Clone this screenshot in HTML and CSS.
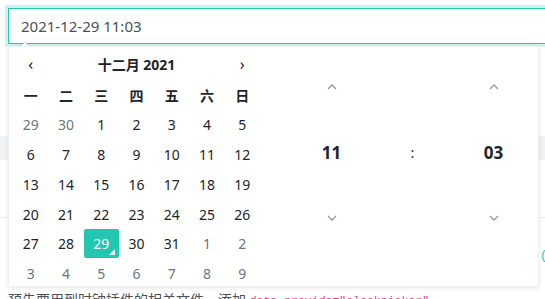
FILE: index.html
```html
<!DOCTYPE html>
<html>
<head>
<meta charset='UTF-8'>
<link rel="stylesheet" href="styles.css">
</head>
<body>
<div class='page'>
  <div class='field'>
    <input class='form-control' type='text' value='2021-12-29 11:03'>
    <div class='picker'>
      <div class='datepicker'>
        <div class='cal-head'>
          <span class='nav'>&#8249;</span>
          <span class='title'>十二月 2021</span>
          <span class='nav'>&#8250;</span>
        </div>
        <div class='cal-grid'>
          <span class='dow'>一</span><span class='dow'>二</span><span class='dow'>三</span><span class='dow'>四</span><span class='dow'>五</span><span class='dow'>六</span><span class='dow'>日</span>
          <span class='day old'>29</span><span class='day old'>30</span><span class='day'>1</span><span class='day'>2</span><span class='day'>3</span><span class='day'>4</span><span class='day'>5</span>
          <span class='day'>6</span><span class='day'>7</span><span class='day'>8</span><span class='day'>9</span><span class='day'>10</span><span class='day'>11</span><span class='day'>12</span>
          <span class='day'>13</span><span class='day'>14</span><span class='day'>15</span><span class='day'>16</span><span class='day'>17</span><span class='day'>18</span><span class='day'>19</span>
          <span class='day'>20</span><span class='day'>21</span><span class='day'>22</span><span class='day'>23</span><span class='day'>24</span><span class='day'>25</span><span class='day'>26</span>
          <span class='day'>27</span><span class='day'>28</span><span class='day active today'>29</span><span class='day'>30</span><span class='day'>31</span><span class='day old'>1</span><span class='day old'>2</span>
          <span class='day old'>3</span><span class='day old'>4</span><span class='day old'>5</span><span class='day old'>6</span><span class='day old'>7</span><span class='day old'>8</span><span class='day old'>9</span>
        </div>
      </div>
      <div class='timepicker'>
        <span class='chev'><svg width='10' height='6' viewBox='0 0 10 6'><path d='M1 5 L5 1 L9 5'/></svg></span>
        <span></span>
        <span class='chev'><svg width='10' height='6' viewBox='0 0 10 6'><path d='M1 5 L5 1 L9 5'/></svg></span>
        <span class='num'>11</span>
        <span class='sep'>:</span>
        <span class='num'>03</span>
        <span class='chev'><svg width='10' height='6' viewBox='0 0 10 6'><path d='M1 1 L5 5 L9 1'/></svg></span>
        <span></span>
        <span class='chev'><svg width='10' height='6' viewBox='0 0 10 6'><path d='M1 1 L5 5 L9 1'/></svg></span>
      </div>
    </div>
  </div>
  <div class='band'></div>
  <div class='rule'></div>
  <div class='code-line'><code>(</code></div>
  <p class='note'>预先要用到时钟插件的相关文件，添加 <code>data-provide="clockpicker"</code></p>
</div>
</body>
</html>
```
FILE: styles.css
```css
/* Variables */

:root {
    --teal: #22c7b2;
    --text: #212529;
    --muted: #6c757d;
}

* {
    margin: 0;
    padding: 0;
    box-sizing: border-box;
}

body {
    font-family: "Noto Sans", "Noto Sans CJK SC", sans-serif;
    color: var(--text);
    background: #fff;
    overflow: hidden;
}

.page {
    padding: 8px 0 0 8px;
}

.field {
    position: relative;
}

.form-control {
    display: block;
    width: 560px;
    height: 36px;
    padding: 0 12px;
    font-family: inherit;
    font-size: 15px;
    color: #495057;
    border: 1px solid var(--teal);
    box-shadow: 0 0 0 3px rgba(34, 199, 178, 0.22);
    outline: none;
}

/* Dropdown */

.picker {
    position: absolute;
    top: 38px;
    left: 0;
    width: 531px;
    height: 241px;
    padding: 1px 4px 0;
    display: flex;
    background: #fff;
    border: 1px solid rgba(0, 0, 0, 0.06);
    box-shadow: 0 1px 4px rgba(0, 0, 0, 0.1);
    z-index: 2;
}

.picker::before, .picker::after {
    content: '';
    position: absolute;
    left: 10px;
    top: -6px;
    border-left: 6px solid transparent;
    border-right: 6px solid transparent;
    border-bottom: 6px solid rgba(0, 0, 0, 0.12);
}

.picker::after {
    left: 11px;
    top: -5px;
    border-left-width: 5px;
    border-right-width: 5px;
    border-bottom: 5px solid #fff;
}

.datepicker {
    width: 247px;
    font-size: 14px;
}

.cal-head {
    display: grid;
    grid-template-columns: 1fr 5fr 1fr;
    height: 32px;
    align-items: center;
    text-align: center;
}

.nav {
    font-size: 16px;
    line-height: 1;
}

.title {
    font-weight: bold;
}

.cal-grid {
    display: grid;
    grid-template-columns: repeat(7, 1fr);
    grid-auto-rows: 29.8px;
    text-align: center;
}

.cal-grid span {
    display: flex;
    align-items: center;
    justify-content: center;
}

.dow {
    font-weight: bold;
}

.day.old {
    color: var(--muted);
}

.day.active {
    position: relative;
    background: var(--teal);
    color: #fff;
    border-radius: 2px;
    margin-bottom: 1px;
}

.day.today::before {
    content: '';
    position: absolute;
    right: 4px;
    bottom: 3px;
    border-left: 6px solid transparent;
    border-bottom: 6px solid #fff;
}

/* Time */

.timepicker {
    margin-left: 31px;
    width: 243px;
    display: grid;
    grid-template-columns: repeat(3, 1fr);
    grid-template-rows: 78px 52px 80px;
    align-items: center;
    justify-items: center;
}

.chev svg {
    display: block;
    fill: none;
    stroke: #8e9aa9;
    stroke-width: 1.3;
}

.num {
    font-size: 17px;
    font-weight: bold;
}

.sep {
    font-size: 14px;
}

/* Page behind */

.band {
    margin-top: 92px;
    margin-left: -8px;
    height: 24px;
    background: #f1f2f6;
}

.rule {
    margin-top: 57px;
    margin-left: -8px;
    border-top: 1px solid #e9ecef;
}

.code-line {
    margin-top: 28px;
    padding-left: 532px;
    white-space: nowrap;
    font-size: 12px;
}

.code-line code {
    color: #1fbfa6;
    font-family: "Liberation Mono", monospace;
}

.note {
    margin-top: 26px;
    font-size: 14px;
    line-height: 21px;
    color: #495057;
    white-space: nowrap;
}

.note code {
    color: #e83e8c;
    font-family: "Liberation Mono", monospace;
    font-size: 11.5px;
    vertical-align: 1px;
}
```
